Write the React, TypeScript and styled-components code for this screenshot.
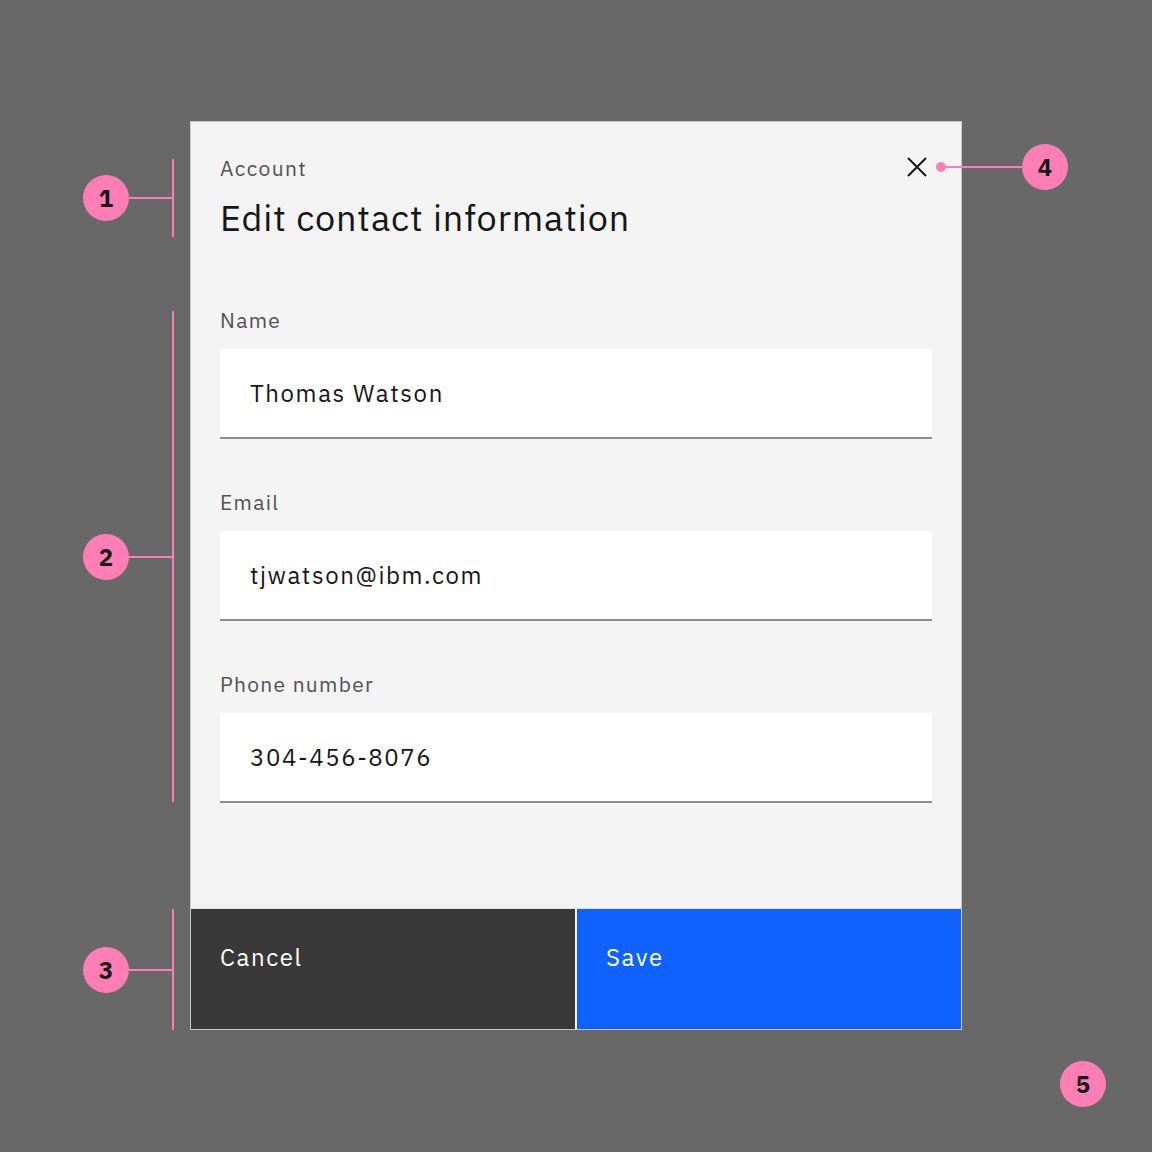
import React from "react";
import styled, { createGlobalStyle } from "styled-components";

const FONT = `"IBM Plex Sans", "Noto Sans", "Open Sans", sans-serif`;

const Global = createGlobalStyle`
  html, body { margin: 0; padding: 0; }
  body { font-family: ${FONT}; }
`;

const PINK = "#ff7eb6";

const Stage = styled.div`
  position: relative;
  width: 1152px;
  height: 1152px;
  box-sizing: border-box;
  background: #686868;
  padding: 121px 0 0 190px;
  font-family: ${FONT};
`;

const Modal = styled.div`
  width: 772px;
  height: 909px;
  box-sizing: border-box;
  border: 1px solid #c6c6c6;
  background: #f4f4f4;
  display: flex;
  flex-direction: column;
`;

const Body = styled.div`
  flex: 1;
  padding: 32px 29px 0 29px;
  display: flex;
  flex-direction: column;
`;

const HeaderRow = styled.div`
  display: flex;
  justify-content: space-between;
  align-items: flex-start;
`;

const HeaderText = styled.div`
  display: flex;
  flex-direction: column;
  gap: 14px;
`;

const Eyebrow = styled.div`
  font-size: 21px;
  line-height: 28px;
  color: #525252;
  letter-spacing: 1.4px;
`;

const Title = styled.h2`
  margin: 0;
  font-size: 36px;
  line-height: 44px;
  font-weight: 400;
  color: #161616;
  letter-spacing: 0.9px;
`;

const CloseButton = styled.button`
  border: 0;
  background: transparent;
  padding: 0;
  width: 24px;
  height: 24px;
  margin: 1px 3px 0 0;
  display: flex;
  align-items: center;
  justify-content: center;
  cursor: pointer;
`;

const Form = styled.div`
  margin-top: 66px;
  display: flex;
  flex-direction: column;
  gap: 49px;
`;

const Field = styled.div`
  display: flex;
  flex-direction: column;
  gap: 15px;
`;

const Label = styled.label`
  font-size: 21px;
  line-height: 28px;
  color: #525252;
  letter-spacing: 1.3px;
`;

const Input = styled.div`
  height: 90px;
  box-sizing: border-box;
  background: #ffffff;
  border-bottom: 2px solid #8d8d8d;
  padding: 0 30px;
  display: flex;
  align-items: center;
  font-size: 24px;
  color: #161616;
  letter-spacing: 1.6px;
`;

const Footer = styled.div`
  height: 121px;
  box-sizing: border-box;
  border-top: 1px solid #e0e0e0;
  display: grid;
  grid-template-columns: 1fr 1fr;
  gap: 2px;
  background: #f4f4f4;
`;

const ActionButton = styled.button<{ $primary?: boolean }>`
  border: 0;
  margin: 0;
  background: ${(p) => (p.$primary ? "#0f62fe" : "#393939")};
  color: #ffffff;
  font-family: ${FONT};
  font-size: 24px;
  line-height: 30px;
  letter-spacing: 1.6px;
  text-align: left;
  padding: 33px 30px 0 29px;
  display: flex;
  align-items: flex-start;
  cursor: pointer;
`;

/* Annotation overlays */
const Annotation = styled.div<{ $x: number; $y: number; $w: number; $h: number; $reverse?: boolean }>`
  position: absolute;
  left: ${(p) => p.$x}px;
  top: ${(p) => p.$y}px;
  width: ${(p) => p.$w}px;
  height: ${(p) => p.$h}px;
  display: flex;
  flex-direction: ${(p) => (p.$reverse ? "row-reverse" : "row")};
  align-items: center;
`;

const Badge = styled.div`
  flex: none;
  width: 46px;
  height: 46px;
  border-radius: 50%;
  background: ${PINK};
  color: #161616;
  font-family: ${FONT};
  font-weight: 700;
  font-size: 24px;
  display: flex;
  align-items: center;
  justify-content: center;
`;

const Connector = styled.div`
  flex: 1;
  height: 2px;
  background: ${PINK};
`;

const Bracket = styled.div`
  flex: none;
  width: 2px;
  align-self: stretch;
  background: ${PINK};
`;

const Dot = styled.div`
  flex: none;
  width: 10px;
  height: 10px;
  border-radius: 50%;
  background: ${PINK};
`;

const fields = [
  { label: "Name", value: "Thomas Watson" },
  { label: "Email", value: "tjwatson@ibm.com" },
  { label: "Phone number", value: "304-456-8076" },
];

const brackets = [
  { n: "1", top: 159, h: 78 },
  { n: "2", top: 311, h: 491 },
  { n: "3", top: 909, h: 121 },
];

export default function App() {
  return (
    <>
      <Global />
      <Stage>
        <Modal>
          <Body>
            <HeaderRow>
              <HeaderText>
                <Eyebrow>Account</Eyebrow>
                <Title>Edit contact information</Title>
              </HeaderText>
              <CloseButton aria-label="Close">
                <svg width="22" height="22" viewBox="0 0 22 22">
                  <path d="M2 2 L20 20 M20 2 L2 20" stroke="#161616" strokeWidth="2" fill="none" />
                </svg>
              </CloseButton>
            </HeaderRow>
            <Form>
              {fields.map((f) => (
                <Field key={f.label}>
                  <Label>{f.label}</Label>
                  <Input>{f.value}</Input>
                </Field>
              ))}
            </Form>
          </Body>
          <Footer>
            <ActionButton>Cancel</ActionButton>
            <ActionButton $primary>Save</ActionButton>
          </Footer>
        </Modal>

        {brackets.map((b) => (
          <Annotation key={b.n} $x={83} $y={b.top} $w={91} $h={b.h}>
            <Badge>{b.n}</Badge>
            <Connector />
            <Bracket />
          </Annotation>
        ))}

        <Annotation $x={936} $y={144} $w={132} $h={46} $reverse>
          <Badge>4</Badge>
          <Connector />
          <Dot />
        </Annotation>

        <Annotation $x={1060} $y={1061} $w={46} $h={46}>
          <Badge>5</Badge>
        </Annotation>
      </Stage>
    </>
  );
}
